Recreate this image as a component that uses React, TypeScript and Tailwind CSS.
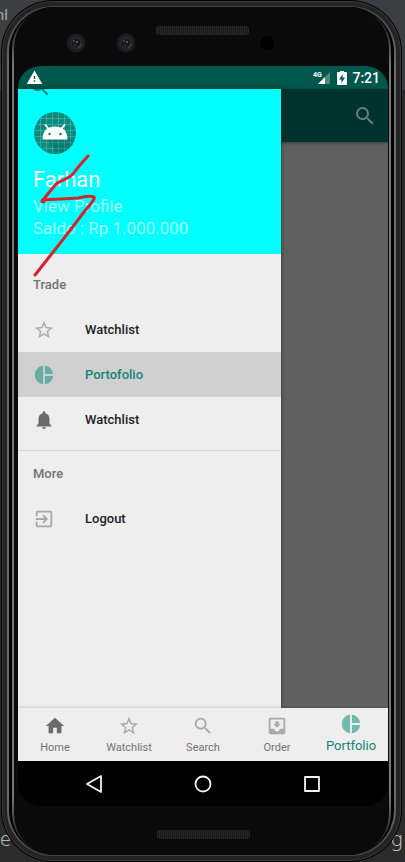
import type { ReactNode } from "react";
import type { IconType } from "react-icons";
import {
  MdExitToApp,
  MdHome,
  MdMoveToInbox,
  MdNotifications,
  MdPieChart,
  MdSearch,
  MdStarBorder,
  MdWarning,
} from "react-icons/md";

type Item = { label: string; icon: IconType; tone: string; active?: boolean };

const tradeItems: Item[] = [
  { label: "Watchlist", icon: MdStarBorder, tone: "text-[#a9a9a9]" },
  { label: "Portofolio", icon: MdPieChart, tone: "text-[#66aea4]", active: true },
  { label: "Watchlist", icon: MdNotifications, tone: "text-[#6b6b6b]" },
];

const moreItems: Item[] = [
  { label: "Logout", icon: MdExitToApp, tone: "text-[#a9a9a9]" },
];

const tabs: Item[] = [
  { label: "Home", icon: MdHome, tone: "text-[#6b6b6b]" },
  { label: "Watchlist", icon: MdStarBorder, tone: "text-[#a9a9a9]" },
  { label: "Search", icon: MdSearch, tone: "text-[#a9a9a9]" },
  { label: "Order", icon: MdMoveToInbox, tone: "text-[#a9a9a9]" },
  { label: "Portfolio", icon: MdPieChart, tone: "text-[#74b9ae]", active: true },
];

function Camera() {
  return (
    <svg viewBox="0 0 20 20" className="size-5" aria-hidden="true">
      <circle cx="10" cy="10" r="9.500" fill="#1b1c1e" />
      <circle cx="10" cy="10" r="7" fill="#232527" />
      <circle cx="10" cy="10" r="4" fill="#15171a" />
      <circle cx="8" cy="8" r="1" fill="#4c5053" />
      <circle cx="11" cy="9" r="1" fill="#686c6f" />
      <circle cx="9" cy="12" r="1" fill="#3d4043" />
      <path d="M12 15a5 5 0 0 0 3-4" stroke="#383b3e" strokeWidth="2" fill="none" />
    </svg>
  );
}

function Speaker() {
  return (
    <div className="h-[9px] w-[93px] rounded-[3px] bg-[repeating-linear-gradient(90deg,#272727_0_1px,#191919_1px_2px)]" />
  );
}

function StatusBar() {
  return (
    <div className="flex h-[23px] items-center bg-[#00574b] px-2 text-white">
      <MdWarning className="size-[17px]" />
      <svg viewBox="0 0 18 16" className="ml-auto h-4 w-[18px]" aria-label="4G signal">
        <path d="M17 2v12H5z" fill="#fff" fillOpacity=".3" />
        <path d="M12 7v7H5z" fill="#fff" />
        <text x="0" y="7" fontSize="7" fontWeight="700" fontFamily="Roboto, sans-serif" fill="#fff">
          4G
        </text>
      </svg>
      <svg viewBox="0 0 10 16" className="ml-[6px] h-4 w-[10px]" aria-label="Battery charging">
        <path d="M3 1h4v1h2a1 1 0 0 1 1 1v11a1 1 0 0 1-1 1H1a1 1 0 0 1-1-1V3a1 1 0 0 1 1-1h2z" fill="#fff" />
        <path d="M6 4L2 9.500h2.500V13L8 7.500H5.500z" fill="#00574b" />
      </svg>
      <span className="ml-[5px] text-[14px] leading-4 font-medium">7:21</span>
    </div>
  );
}

function Avatar() {
  return (
    <svg viewBox="0 0 42 42" className="size-[42px]" aria-label="Profile picture">
      <defs>
        <clipPath id="avatar-disc">
          <circle cx="21" cy="21" r="21" />
        </clipPath>
      </defs>
      <g clipPath="url(#avatar-disc)">
        <rect width="42" height="42" fill="#0b8a7d" />
        <path
          d="M6.500 0v42M12.500 0v42M18.500 0v42M24.500 0v42M30.500 0v42M36.500 0v42M0 6.500h42M0 12.500h42M0 18.500h42M0 24.500h42M0 30.500h42M0 36.500h42"
          stroke="#55b5ab"
          strokeWidth=".6"
        />
        <path d="M12 27L25 15 42 32v10H25z" fill="#04584f" fillOpacity=".25" />
      </g>
      <path d="M8.500 27.500C8.500 18 14 14.500 21 14.500S33.500 18 33.500 27.500z" fill="#fff" />
      <path d="M11.500 13l4 5M30.500 13l-4 5" stroke="#fff" strokeWidth="1.800" strokeLinecap="round" />
      <circle cx="15.500" cy="22" r="1.200" fill="#0b7268" />
      <circle cx="26.500" cy="22" r="1.200" fill="#0b7268" />
    </svg>
  );
}

function DrawerSection({ title, items }: { title: string; items: Item[] }) {
  return (
    <section>
      <h2 className="flex h-[45px] items-center px-[15px] text-[13px] font-medium text-[#737373]">{title}</h2>
      {items.map(({ label, icon: Icon, tone, active }, i) => (
        <button
          key={i}
          type="button"
          className={`flex h-[45px] w-full items-center gap-[30px] px-[15px] text-[13px] font-medium ${
            active ? "bg-[#d0d0d0] text-[#128577]" : "text-[#1d1d1d]"
          }`}
        >
          <Icon className={`size-[22px] ${tone}`} />
          {label}
        </button>
      ))}
    </section>
  );
}

function Drawer() {
  return (
    <aside className="z-10 w-[263px] shrink-0 bg-[#eeeeee] shadow-[0_0_4px_rgba(0,0,0,0.500)]">
      <header className="relative h-[165px] bg-[#00ffff] px-[15px] pt-[23px]">
        <div className="absolute top-0 left-[10px] h-2 w-6 overflow-hidden">
          <MdSearch className="-mt-[14px] size-6 text-[#008a86]" />
        </div>
        <div className="pl-px">
          <Avatar />
        </div>
        <h1 className="mt-[13px] text-[22px] leading-[26px] text-white">Farhan</h1>
        <a href="#profile" className="block text-[17px] leading-[26px] text-[#a6ffff]">
          View Profile
        </a>
        <p className="text-[17px] leading-[18px] text-[#a6ffff]">Saldo : Rp 1.000.000</p>
        {/* hand-drawn marker stroke */}
        <svg
          viewBox="0 0 80 130"
          className="pointer-events-none absolute top-[61px] left-[10px] h-[130px] w-20"
          aria-hidden="true"
        >
          <path
            d="M60 6C54 13 50 17 45 24C40 29 34 30 28 34L15 50C28 49 40 49 50 48C58 46 68 45 66 49C64 53 59 58 56 62L37 87L22 106L7 125"
            fill="none"
            stroke="#d9222b"
            strokeWidth="3"
            strokeLinecap="round"
            strokeLinejoin="round"
          />
          <circle cx="15" cy="51" r="2.500" fill="#d9222b" />
        </svg>
      </header>
      <nav aria-label="Drawer" className="pt-2">
        <DrawerSection title="Trade" items={tradeItems} />
        <hr className="mt-2 border-[#d2d2d2]" />
        <DrawerSection title="More" items={moreItems} />
      </nav>
    </aside>
  );
}

function TabBar() {
  return (
    <nav aria-label="Main" className="z-20 grid h-[53px] grid-cols-5 bg-[#eeeeee] shadow-[0_-1px_2px_rgba(0,0,0,0.150)]">
      {tabs.map(({ label, icon: Icon, tone, active }) => (
        <button
          key={label}
          type="button"
          className={`flex flex-col items-center ${
            active ? "pt-[5px] text-[13px] text-[#128577]" : "pt-[7px] text-[11px] text-[#737373]"
          }`}
        >
          <Icon className={`size-[22px] ${tone}`} />
          <span className="leading-[22px]">{label}</span>
        </button>
      ))}
    </nav>
  );
}

function SystemKey({ label, children }: { label: string; children: ReactNode }) {
  return (
    <button type="button" aria-label={label} className="size-5">
      <svg viewBox="0 0 20 20" className="size-5" fill="none" stroke="#f2f2f2" strokeWidth="1.800" strokeLinejoin="round">
        {children}
      </svg>
    </button>
  );
}

function Screen() {
  return (
    <div className="flex flex-1 flex-col overflow-hidden rounded-[22px] bg-black">
      <StatusBar />
      <div className="flex flex-1">
        <Drawer />
        <main className="flex-1 bg-[#606060]">
          <div className="flex h-[53px] items-center justify-end bg-[#00332d] pr-[11px] shadow-[0_1px_3px_rgba(0,0,0,0.400)]">
            <button type="button" aria-label="Search">
              <MdSearch className="size-6 text-[#667f7b]" />
            </button>
          </div>
        </main>
      </div>
      <TabBar />
      <div className="flex h-[45px] items-center justify-center gap-[89px]">
        <SystemKey label="Back">
          <path d="M17 2v16L3 10z" />
        </SystemKey>
        <SystemKey label="Home">
          <circle cx="10" cy="10" r="7.500" />
        </SystemKey>
        <SystemKey label="Recents">
          <rect x="3" y="3" width="14" height="14" />
        </SystemKey>
      </div>
    </div>
  );
}

export default function App() {
  return (
    <div className="relative flex min-h-screen flex-col overflow-hidden bg-[linear-gradient(#3c3f41_0_90px,#2b2b2b_90px)] font-[Roboto,sans-serif]">
      <span className="absolute top-[5px] left-[-9px] text-[15px] leading-5 text-[#a9acae]">ml</span>
      <span className="absolute bottom-[11px] left-0 font-['Noto_Sans',sans-serif] text-[20px] leading-6 font-light text-[#b8b8b8]">e</span>
      <span className="absolute right-[2px] bottom-[11px] font-['Noto_Sans',sans-serif] text-[20px] leading-6 font-light text-[#b8b8b8]">g</span>
      {/* metal rim, from the outer edge inward */}
      <div className="relative mr-[3px] ml-px flex flex-1 flex-col rounded-[52px] bg-black p-px">
        <div className="flex flex-1 flex-col rounded-[51px] bg-[#3a3a3a] p-px">
          <div className="flex flex-1 flex-col rounded-[50px] bg-[#242424] p-1">
            <div className="flex flex-1 flex-col rounded-[46px] bg-[linear-gradient(#454545,#6c6c6c_60px,#6c6c6c_calc(100%-60px),#454545)] px-[2px] py-px">
              <div className="flex flex-1 flex-col rounded-[45px] bg-black px-[3px]">
                <div className="flex flex-1 flex-col rounded-[42px] bg-[linear-gradient(#0a0a0a,#777_60px,#777_calc(100%-60px),#0a0a0a)] px-[2px]">
                  <div className="flex flex-1 flex-col rounded-[41px] bg-[#0a0a0a] pr-px pl-1">
                    <div className="flex h-[59px] items-start pl-12">
                      <div className="flex items-center gap-[30px] pt-[26px]">
                        <Camera />
                        <Camera />
                      </div>
                      <div className="pt-[19px] pl-5">
                        <Speaker />
                      </div>
                      <div className="pt-[29px] pl-[11px]">
                        <div className="size-[14px] rounded-full bg-black" />
                      </div>
                    </div>
                    <Screen />
                    <div className="flex h-[49px] justify-center pt-6">
                      <Speaker />
                    </div>
                  </div>
                </div>
              </div>
            </div>
          </div>
        </div>
      </div>
    </div>
  );
}
